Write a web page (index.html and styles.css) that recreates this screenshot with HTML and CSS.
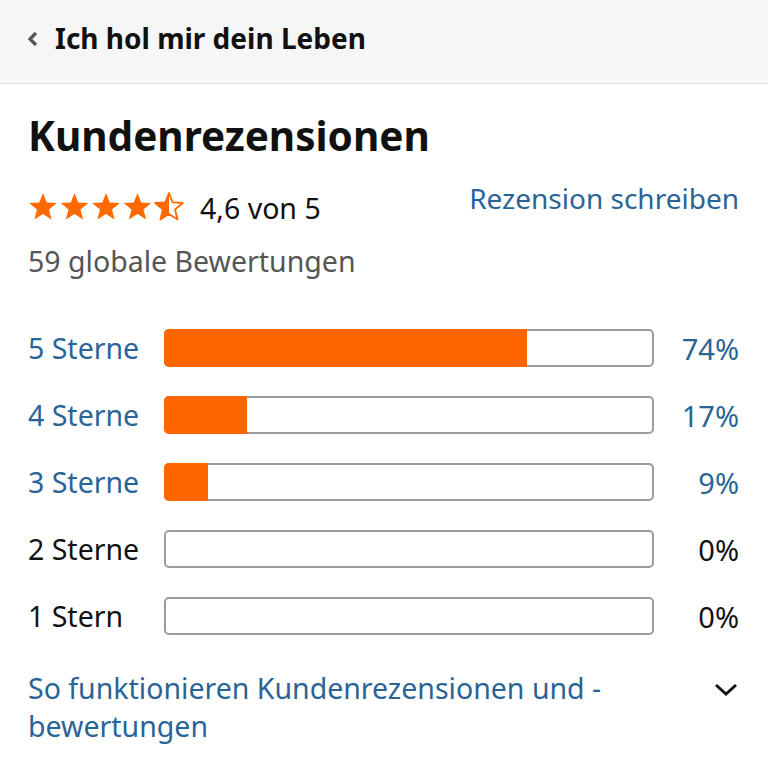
FILE: index.html
```html
<!DOCTYPE html>
<html lang="de">
<head>
<meta charset="utf-8">
<link rel="stylesheet" href="styles.css">
</head>
<body>
<header class="topbar">
  <svg class="back" width="14" height="18" viewBox="0 0 14 18"><path d="M10 3 L4 9 L10 15" fill="none" stroke="#555" stroke-width="3.2"/></svg>
  <span class="topbar-title">Ich hol mir dein Leben</span>
</header>
<main class="content">
  <h1 class="heading">Kundenrezensionen</h1>
  <div class="summary">
    <div class="rating">
      <svg class="stars" width="158" height="30" viewBox="0 0 158 30">
        <defs>
          <path id="st" d="M15 1 L18.7 10.4 L28.8 11 L21 17.5 L23.6 27.5 L15 22 L6.4 27.5 L9 17.5 L1.2 11 L11.3 10.4 Z"/>
          <clipPath id="half"><rect x="0" y="0" width="15" height="30"/></clipPath>
        </defs>
        <use href="#st" x="0" fill="#ff6a00"/>
        <use href="#st" x="31.5" fill="#ff6a00"/>
        <use href="#st" x="63" fill="#ff6a00"/>
        <use href="#st" x="94.5" fill="#ff6a00"/>
        <g transform="translate(126,0)">
          <path d="M15 1 L18.7 10.4 L28.8 11 L21 17.5 L23.6 27.5 L15 22 L6.4 27.5 L9 17.5 L1.2 11 L11.3 10.4 Z" fill="none" stroke="#ff6a00" stroke-width="1.8" stroke-linejoin="round"/>
          <path d="M15 1 L18.7 10.4 L28.8 11 L21 17.5 L23.6 27.5 L15 22 L6.4 27.5 L9 17.5 L1.2 11 L11.3 10.4 Z" fill="#ff6a00" clip-path="url(#half)"/>
        </g>
      </svg>
      <span class="rating-text">4,6 von 5</span>
    </div>
    <a class="link write">Rezension schreiben</a>
  </div>
  <p class="total">59 globale Bewertungen</p>
  <div class="hist">
    <div class="row active"><span class="label">5 Sterne</span><div class="bar"><div class="fill" style="width:74%"></div></div><span class="pct">74%</span></div>
    <div class="row active"><span class="label">4 Sterne</span><div class="bar"><div class="fill" style="width:17%"></div></div><span class="pct">17%</span></div>
    <div class="row active"><span class="label">3 Sterne</span><div class="bar"><div class="fill" style="width:9%"></div></div><span class="pct">9%</span></div>
    <div class="row"><span class="label">2 Sterne</span><div class="bar"></div><span class="pct">0%</span></div>
    <div class="row"><span class="label">1 Stern</span><div class="bar"></div><span class="pct">0%</span></div>
  </div>
  <div class="howto">
    <a class="link howto-text">So funktionieren Kundenrezensionen und -bewertungen</a>
    <svg class="chev" width="26" height="16" viewBox="0 0 26 16"><path d="M3 3 L13 12 L23 3" fill="none" stroke="#111" stroke-width="3"/></svg>
  </div>
</main>
</body>
</html>
```
FILE: styles.css
```css
* { box-sizing: border-box; }
html, body { margin: 0; padding: 0; background: #fff; }
body { font-family: "Noto Sans", "Open Sans", sans-serif; color: #111; width: 768px; }
.topbar {
  height: 84px;
  background: #f6f6f6;
  border-bottom: 1px solid #e3e3e3;
  display: flex;
  align-items: center;
  padding: 0 0 8px 26px;
  gap: 15px;
}
.back { flex: none; margin-top: 2px; }
.topbar-title { font-size: 28px; font-weight: 700; color: #111; }
.content { padding: 0 29px 0 28px; }
.heading { margin: 26px 0 0; font-size: 40.5px; line-height: 52px; font-weight: 700; }
.summary { display: flex; justify-content: space-between; align-items: flex-start; margin-top: 25px; height: 38px; }
.rating { display: flex; align-items: center; gap: 14px; margin-top: 0; }
.stars { flex: none; }
.rating-text { font-size: 28.5px; color: #111; margin-top: 2px; }
.link { color: #2a6496; text-decoration: none; }
.write { font-size: 28px; line-height: 38px; margin-top: -8px; }
.total { margin: 18px 0 0; font-size: 28.5px; color: #555; line-height: 36px; }
.hist { margin-top: 50px; display: flex; flex-direction: column; gap: 29px; }
.row { display: flex; align-items: center; height: 38px; }
.label { width: 136px; font-size: 28.5px; color: #111; }
.row.active .label, .row.active .pct { color: #2a6496; }
.bar {
  width: 490px; height: 38px;
  box-shadow: inset 0 0 0 2px #9c9c9c;
  border-radius: 5px;
  overflow: hidden;
  background: #fff;
}
.fill { height: 100%; background: #ff6600; }
.pct { flex: 1; text-align: right; font-size: 29px; color: #111; }
.howto { display: flex; justify-content: space-between; align-items: flex-start; margin-top: 34px; }
.howto-text { font-size: 28.5px; line-height: 38px; width: 620px; }
.chev { flex: none; margin-top: 13px; }
```
